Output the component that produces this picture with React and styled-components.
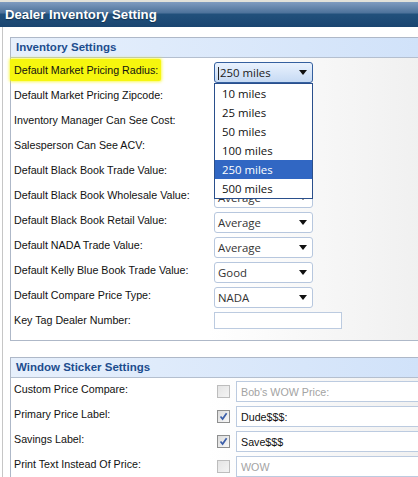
import React from "react";
import styled, { createGlobalStyle } from "styled-components";

const GlobalStyle = createGlobalStyle`
  html, body {
    margin: 0;
    padding: 0;
    background: #fff;
    overflow: hidden;
  }
  body {
    font-family: "Liberation Sans", Arial, sans-serif;
  }
`;

const Page = styled.div`
  width: 418px;
  height: 477px;
  overflow: hidden;
  display: flex;
  flex-direction: column;
`;

const TitleBar = styled.div`
  height: 25px;
  border-top: 2px solid #e2e2da;
  background: linear-gradient(to bottom, #7f9cc0 0%, #4f749c 42%, #21507b 50%, #1a4570 100%);
  color: #fff;
  font-weight: bold;
  font-size: 13.2px;
  line-height: 26px;
  padding-left: 5px;
  text-shadow: 0 1px 1px rgba(0, 0, 0, 0.35);
  flex-shrink: 0;
`;

const Content = styled.div`
  flex: 1;
  margin-left: 2px;
  border-left: 1px solid #c6c6c6;
  padding: 10px 0 0 7px;
  display: flex;
  flex-direction: column;
  gap: 16px;
`;

const Panel = styled.div`
  width: 440px;
  border: 1px solid #aeb8c8;
  background: linear-gradient(to right, #ffffff 45%, #eeeeee 100%);
  padding-bottom: ${(p) => p.$bottom || 0}px;
  flex-shrink: 0;
`;

const PanelHead = styled.div`
  height: 19px;
  line-height: 19px;
  border-bottom: 1px solid #b4bfcf;
  background: linear-gradient(to right, #e7f0fc, #cfe1f9);
  color: #1d4d8e;
  font-weight: bold;
  font-size: 11.5px;
  padding-left: 5px;
`;

const Row = styled.div`
  display: grid;
  grid-template-columns: 203px 1fr;
  align-items: center;
  height: 25px;
`;

const Label = styled.div`
  padding-left: 3px;
  padding-bottom: ${(p) => p.$lift || 0}px;
  font-size: 10.7px;
  color: #111;
  white-space: nowrap;
`;

const Highlight = styled.span`
  display: inline-block;
  margin-left: -4px;
  padding: 0 3px 0 4px;
  line-height: 22px;
  background: #f6f60e;
  box-shadow: 0 0 3px 1px rgba(246, 246, 14, 0.7);
  border-radius: 2px;
`;

const Cell = styled.div`
  display: flex;
  align-items: center;
  gap: 6px;
  margin-top: ${(p) => p.$drop || 0}px;
  margin-left: ${(p) => p.$indent || 0}px;
`;

const SelectWrap = styled.div`
  position: relative;
  width: 99px;
`;

const SelectBox = styled.div`
  box-sizing: border-box;
  height: 21px;
  border: 1px solid ${(p) => (p.$open ? "#35609f" : "#b7c7de")};
  border-radius: 3px;
  background: ${(p) =>
    p.$open ? "linear-gradient(to bottom, #eaf2fd, #c6daf4)" : "#fff"};
  display: flex;
  align-items: center;
  justify-content: space-between;
  padding: 0 5px 0 3px;
  font-family: "Open Sans", "Noto Sans", sans-serif;
  font-size: 11.4px;
  color: ${(p) => (p.$open ? "#1a1a1a" : "#333")};
`;

const Caret = styled.span`
  display: inline-block;
  width: 1px;
  height: 13px;
  background: #222;
  margin-right: 1px;
  vertical-align: middle;
`;

const List = styled.div`
  position: absolute;
  top: 100%;
  left: 0;
  width: 100%;
  box-sizing: border-box;
  border: 1px solid #2a4f8c;
  background: #fff;
  z-index: 5;
`;

const Option = styled.div`
  height: 19px;
  line-height: 19px;
  padding-left: 7px;
  font-family: "Open Sans", "Noto Sans", sans-serif;
  font-size: 11.4px;
  color: ${(p) => (p.$active ? "#fff" : "#111")};
  background: ${(p) => (p.$active ? "#3167c3" : "transparent")};
`;

const TextBox = styled.div`
  box-sizing: border-box;
  width: ${(p) => p.$w}px;
  height: ${(p) => p.$h}px;
  border: 1px solid #bccbe0;
  background: #fff;
  padding-left: 4px;
  display: flex;
  align-items: center;
  font-size: 10.7px;
  color: ${(p) => (p.$dim ? "#a3a3a3" : "#111")};
`;

const Check = styled.span`
  box-sizing: border-box;
  width: 13px;
  height: 13px;
  flex-shrink: 0;
  border: 1px solid ${(p) => (p.$dim ? "#bdbdbd" : "#8e8f8f")};
  background: ${(p) =>
    p.$dim
      ? "linear-gradient(135deg, #e4e4e4, #f4f4f4)"
      : "linear-gradient(135deg, #dcdcdc, #f8f8f8)"};
  display: flex;
  align-items: center;
  justify-content: center;
`;

const Arrow = () => (
  <svg width="8" height="5" viewBox="0 0 8 5">
    <path d="M0 0 H8 L4 5 Z" fill="#111" />
  </svg>
);

const Tick = () => (
  <svg width="9" height="9" viewBox="0 0 9 9">
    <path d="M1.5 4.5 L3.6 7 L7.6 1.3" stroke="#3b5ea9" strokeWidth="1.7" fill="none" />
  </svg>
);

const Select = ({ value, open, options }) => (
  <SelectWrap>
    <SelectBox $open={open}>
      <span>
        {open && <Caret />}
        {value}
      </span>
      <Arrow />
    </SelectBox>
    {open && (
      <List>
        {options.map((o) => (
          <Option key={o} $active={o === value}>
            {o}
          </Option>
        ))}
      </List>
    )}
  </SelectWrap>
);

const radius = ["10 miles", "25 miles", "50 miles", "100 miles", "250 miles", "500 miles"];

const inventoryRows = [
  { label: "Default Market Pricing Radius:", select: "250 miles", open: true, mark: true },
  { label: "Default Market Pricing Zipcode:" },
  { label: "Inventory Manager Can See Cost:" },
  { label: "Salesperson Can See ACV:" },
  { label: "Default Black Book Trade Value:", select: "Average" },
  { label: "Default Black Book Wholesale Value:", select: "Average" },
  { label: "Default Black Book Retail Value:", select: "Average" },
  { label: "Default NADA Trade Value:", select: "Average" },
  { label: "Default Kelly Blue Book Trade Value:", select: "Good" },
  { label: "Default Compare Price Type:", select: "NADA" },
  { label: "Key Tag Dealer Number:", input: true },
];

const stickerRows = [
  { label: "Custom Price Compare:", checked: false, text: "Bob's WOW Price:" },
  { label: "Primary Price Label:", checked: true, text: "Dude$$$:" },
  { label: "Savings Label:", checked: true, text: "Save$$$" },
  { label: "Print Text Instead Of Price:", checked: false, text: "WOW" },
];

export default function App() {
  return (
    <Page>
      <GlobalStyle />
      <TitleBar>Dealer Inventory Setting</TitleBar>
      <Content>
        <Panel $bottom={7}>
          <PanelHead>Inventory Settings</PanelHead>
          {inventoryRows.map((r) => (
            <Row key={r.label}>
              <Label $lift={1}>
                {r.mark ? <Highlight>{r.label}</Highlight> : r.label}
              </Label>
              {r.select && (
                <Cell $drop={4}>
                  <Select value={r.select} open={r.open} options={radius} />
                </Cell>
              )}
              {r.input && (
                <Cell>
                  <TextBox $w={128} $h={17} />
                </Cell>
              )}
            </Row>
          ))}
        </Panel>
        <Panel>
          <PanelHead>Window Sticker Settings</PanelHead>
          {stickerRows.map((r) => (
            <Row key={r.label}>
              <Label $lift={4}>{r.label}</Label>
              <Cell $indent={3} $drop={2}>
                <Check $dim={!r.checked}>{r.checked && <Tick />}</Check>
                <TextBox $w={200} $h={21} $dim={!r.checked}>
                  {r.text}
                </TextBox>
              </Cell>
            </Row>
          ))}
        </Panel>
      </Content>
    </Page>
  );
}
